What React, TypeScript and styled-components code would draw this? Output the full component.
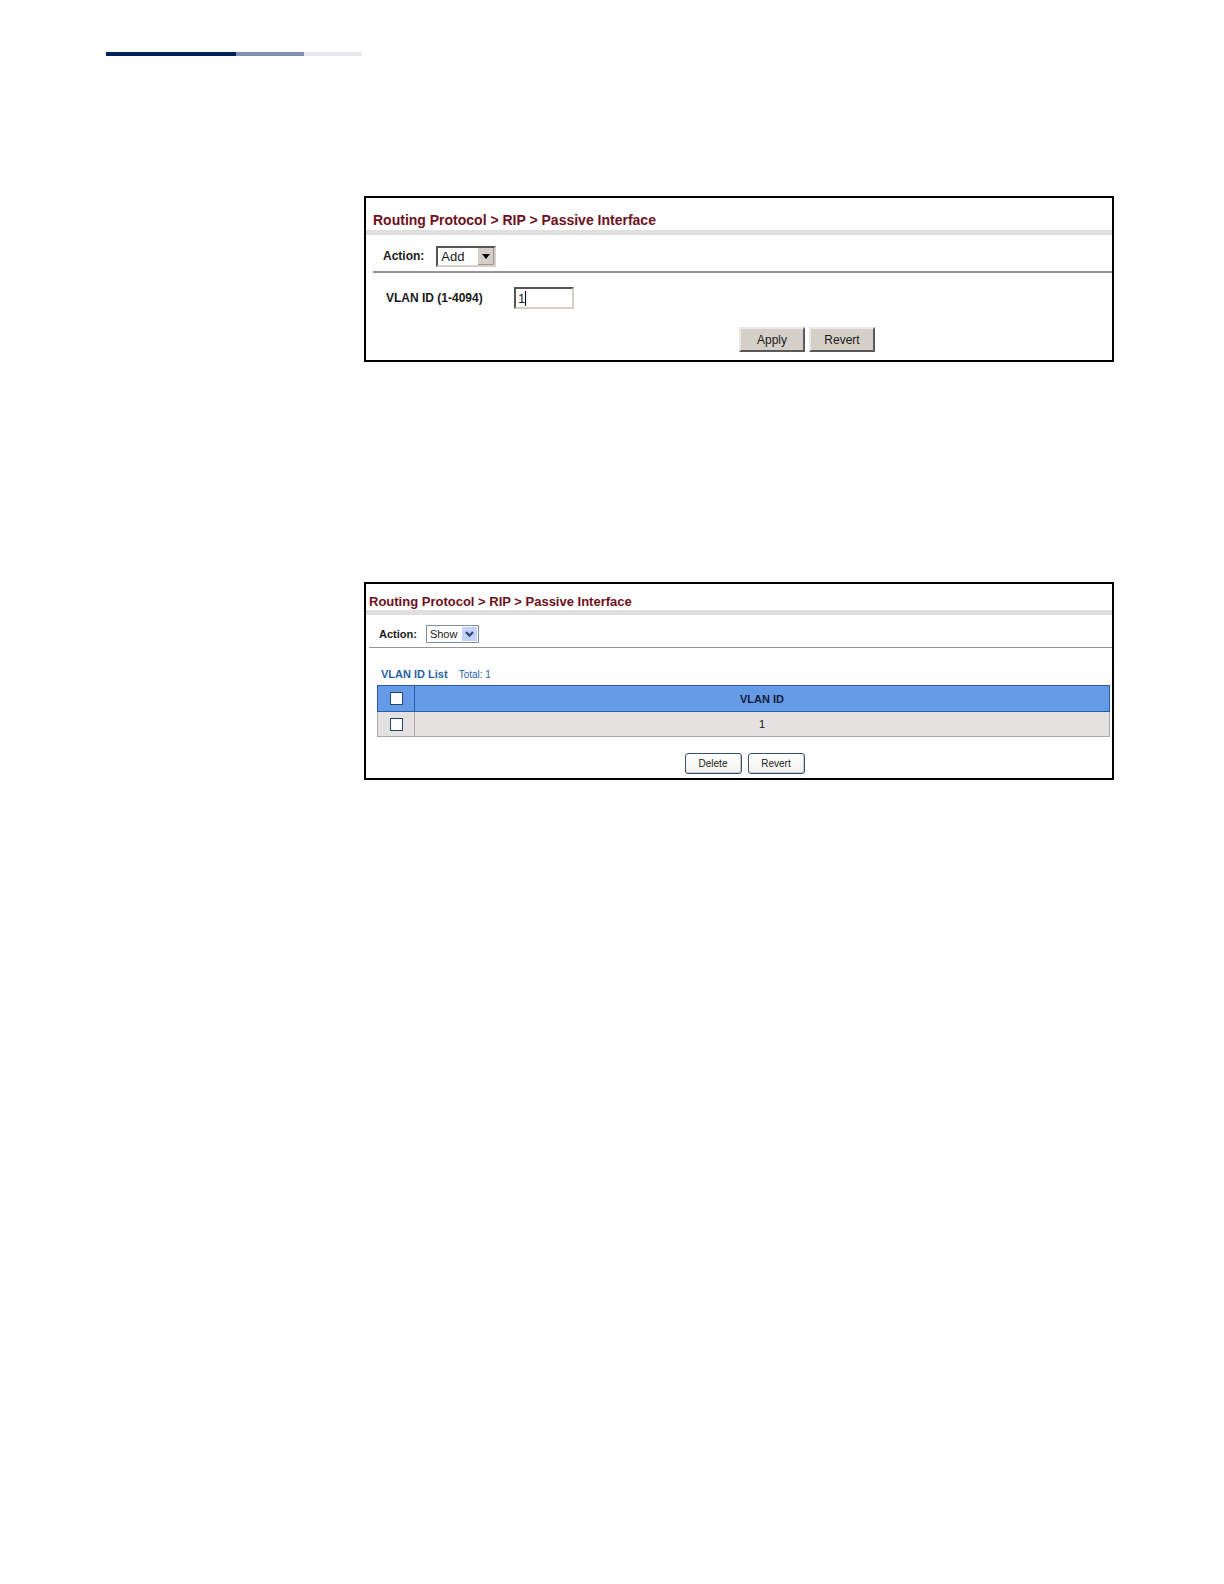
import React, { useState } from 'react';
import styled, { createGlobalStyle } from 'styled-components';

interface VlanRow {
  id: number;
}

const initialRows: VlanRow[] = [{ id: 1 }];

const AddPassiveInterface = () => {
  const [action, setAction] = useState('Add');
  const [vlanId, setVlanId] = useState('1');

  return (
    <St.Panel>
      <St.Title $size={14} $indent={7}>
        Routing Protocol &gt; RIP &gt; Passive Interface
      </St.Title>
      <St.ActionBar $size={12} $height={36} $line={2} $indent={7}>
        <St.Label htmlFor='add-action'>Action:</St.Label>
        <St.SelectBox>
          <St.ClassicSelect
            id='add-action'
            value={action}
            onChange={(e) => setAction(e.target.value)}
          >
            <option>Add</option>
            <option>Show</option>
          </St.ClassicSelect>
          <St.ClassicArrow viewBox='0 0 16 17' aria-hidden='true'>
            <rect width='16' height='17' fill='#d4d0c8' />
            <path d='M0 16.5H15.5V0' fill='none' stroke='#9a9892' />
            <path d='M4 6H12L8 11Z' fill='#000' />
          </St.ClassicArrow>
        </St.SelectBox>
      </St.ActionBar>
      <St.FieldRow>
        <St.Label htmlFor='vlan-id'>VLAN ID (1-4094)</St.Label>
        <St.InputBox>
          <St.VlanInput
            id='vlan-id'
            value={vlanId}
            onChange={(e) => setVlanId(e.target.value)}
          />
          <St.Caret />
        </St.InputBox>
      </St.FieldRow>
      <St.ClassicButtons>
        <St.ClassicButton type='submit'>Apply</St.ClassicButton>
        <St.ClassicButton type='button' onClick={() => setVlanId('1')}>
          Revert
        </St.ClassicButton>
      </St.ClassicButtons>
    </St.Panel>
  );
};

const ShowPassiveInterface = () => {
  const [action, setAction] = useState('Show');
  const [rows, setRows] = useState<VlanRow[]>(initialRows);
  const [selected, setSelected] = useState<number[]>([]);

  const allSelected = rows.length > 0 && selected.length === rows.length;

  const toggleRow = (id: number) => {
    setSelected(
      selected.includes(id)
        ? selected.filter((item) => item !== id)
        : [...selected, id],
    );
  };

  const handleDelete = () => {
    setRows(rows.filter((row) => !selected.includes(row.id)));
    setSelected([]);
  };

  return (
    <St.Panel>
      <St.Title $size={13} $indent={3}>
        Routing Protocol &gt; RIP &gt; Passive Interface
      </St.Title>
      <St.ActionBar $size={11} $height={32} $line={1} $indent={3}>
        <St.Label htmlFor='show-action'>Action:</St.Label>
        <St.SelectBox>
          <St.LunaSelect
            id='show-action'
            value={action}
            onChange={(e) => setAction(e.target.value)}
          >
            <option>Add</option>
            <option>Show</option>
          </St.LunaSelect>
          <St.LunaArrow viewBox='0 0 15 14' aria-hidden='true'>
            <rect width='15' height='14' rx='1' fill='#c3d3fd' />
            <path d='M4 5L7.5 8.5L11 5' fill='none' stroke='#34496e' strokeWidth='2.4' />
          </St.LunaArrow>
        </St.SelectBox>
      </St.ActionBar>
      <St.ListHeading>
        VLAN ID List <St.Total>Total: {rows.length}</St.Total>
      </St.ListHeading>
      <St.Table>
        <thead>
          <tr>
            <St.HeadCell $narrow>
              <St.Checkbox
                type='checkbox'
                aria-label='Select all'
                checked={allSelected}
                onChange={() => setSelected(allSelected ? [] : rows.map((row) => row.id))}
              />
            </St.HeadCell>
            <St.HeadCell>VLAN ID</St.HeadCell>
          </tr>
        </thead>
        <tbody>
          {rows.map((row) => (
            <tr key={row.id}>
              <St.Cell>
                <St.Checkbox
                  type='checkbox'
                  aria-label={`Select VLAN ${row.id}`}
                  checked={selected.includes(row.id)}
                  onChange={() => toggleRow(row.id)}
                />
              </St.Cell>
              <St.Cell>{row.id}</St.Cell>
            </tr>
          ))}
        </tbody>
      </St.Table>
      <St.LunaButtons>
        <St.LunaButton type='button' onClick={handleDelete}>
          Delete
        </St.LunaButton>
        <St.LunaButton
          type='button'
          onClick={() => {
            setRows(initialRows);
            setSelected([]);
          }}
        >
          Revert
        </St.LunaButton>
      </St.LunaButtons>
    </St.Panel>
  );
};

const App = () => (
  <>
    <GlobalStyle />
    <St.Page>
      <St.Stripe>
        <St.StripePart $width={130} $color='#00205f' />
        <St.StripePart $width={68} $color='#8190b0' />
        <St.StripePart $width={58} $color='#e6e8ec' />
      </St.Stripe>
      <St.Figures>
        <AddPassiveInterface />
        <ShowPassiveInterface />
      </St.Figures>
    </St.Page>
  </>
);

const GlobalStyle = createGlobalStyle`
  * {
    box-sizing: border-box;
  }

  body {
    margin: 0;
    background: #fff;
    color: #1a1a1a;
    font-family: 'Liberation Sans', Arial, sans-serif;
  }

  button,
  input,
  select {
    font-family: inherit;
    color: inherit;
  }
`;

const St = {
  Page: styled.main`
    min-height: 100vh;
    padding: 52px 110px 52px 106px;
  `,

  Stripe: styled.div`
    display: flex;
    height: 4px;
  `,

  StripePart: styled.span<{ $width: number; $color: string }>`
    width: ${({ $width }) => $width}px;
    background: ${({ $color }) => $color};
  `,

  Figures: styled.div`
    display: flex;
    flex-direction: column;
    gap: 220px;
    padding: 140px 0 0 258px;
  `,

  Panel: styled.form.attrs({
    onSubmit: (e: React.FormEvent) => e.preventDefault(),
  })`
    border: 2px solid #000;
  `,

  Title: styled.h1<{ $size: number; $indent: number }>`
    margin: 0;
    padding: ${({ $size }) => ($size > 13 ? '14px' : '10px')} 0 ${({ $size }) => ($size > 13 ? '2px' : '0')}
      ${({ $indent }) => $indent}px;
    border-bottom: 5px solid #dfdfdf;
    color: #6e1020;
    font-size: ${({ $size }) => $size}px;
    line-height: 16px;
  `,

  ActionBar: styled.div<{
    $size: number;
    $height: number;
    $line: number;
    $indent: number;
  }>`
    display: flex;
    align-items: center;
    gap: ${({ $size }) => ($size > 11 ? 12 : 9)}px;
    height: ${({ $height }) => $height}px;
    margin-left: ${({ $indent }) => $indent}px;
    padding: 8px 0 2px 10px;
    box-shadow: 0 ${({ $line }) => $line}px 0 #949494;
    font-size: ${({ $size }) => $size}px;
  `,

  Label: styled.label`
    font-weight: bold;
  `,

  SelectBox: styled.span`
    position: relative;
    display: flex;
  `,

  ClassicSelect: styled.select`
    appearance: none;
    width: 60px;
    height: 21px;
    padding: 0 0 0 3px;
    border: 2px solid;
    border-color: #555 #d4d0c8 #d4d0c8 #555;
    border-radius: 0;
    background: #fff;
    font-size: 13px;
  `,

  ClassicArrow: styled.svg`
    position: absolute;
    top: 2px;
    right: 2px;
    width: 16px;
    height: 17px;
    pointer-events: none;
  `,

  LunaSelect: styled.select`
    appearance: none;
    width: 53px;
    height: 18px;
    padding: 0 0 0 3px;
    border: 1px solid #7f8da8;
    border-radius: 0;
    background: #fff;
    font-size: 11px;
  `,

  LunaArrow: styled.svg`
    position: absolute;
    top: 2px;
    right: 2px;
    width: 15px;
    height: 14px;
    pointer-events: none;
  `,

  FieldRow: styled.div`
    display: grid;
    grid-template-columns: 128px 1fr;
    align-items: center;
    padding: 16px 0 0 20px;
    font-size: 12px;
  `,

  InputBox: styled.span`
    position: relative;
    display: flex;
  `,

  VlanInput: styled.input`
    width: 60px;
    height: 22px;
    padding: 0 2px;
    border: 2px solid;
    border-color: #555 #d4d0c8 #d4d0c8 #555;
    outline: none;
    font-size: 13px;
    caret-color: transparent;
  `,

  Caret: styled.span`
    position: absolute;
    top: 4px;
    left: 11px;
    width: 1px;
    height: 15px;
    background: #000;
  `,

  ClassicButtons: styled.div`
    display: flex;
    justify-content: center;
    gap: 4px;
    padding: 18px 0 8px 136px;
  `,

  ClassicButton: styled.button`
    width: 66px;
    height: 25px;
    padding: 0;
    border: 2px solid;
    border-color: #ece9e2 #5a5a5a #5a5a5a #ece9e2;
    background: #d4d0c8;
    font-size: 12px;
  `,

  ListHeading: styled.h2`
    display: flex;
    align-items: baseline;
    gap: 11px;
    margin: 0;
    padding: 20px 0 3px 15px;
    color: #2a5fa5;
    font-size: 11px;
    line-height: 14px;
  `,

  Total: styled.span`
    font-size: 10px;
    font-weight: normal;
  `,

  Table: styled.table`
    width: calc(100% - 13px);
    margin-left: 11px;
    border-collapse: collapse;
    border: 1px solid #a9a9ab;
    text-align: center;
    font-size: 11px;
  `,

  HeadCell: styled.th<{ $narrow?: boolean }>`
    width: ${({ $narrow }) => ($narrow ? '37px' : 'auto')};
    height: 26px;
    padding: 0;
    border: 1px solid #2a5caa;
    background: #659be6;
    color: #101c3c;
  `,

  Cell: styled.td`
    height: 25px;
    padding: 0;
    border: 1px solid #a9a9ab;
    background: #e3e2e1;
  `,

  Checkbox: styled.input`
    appearance: none;
    display: block;
    width: 13px;
    height: 13px;
    margin: 0 auto;
    border: 1px solid #27466f;
    background: #fff;

    &:checked {
      box-shadow: inset 0 0 0 2px #fff;
      background: #21a121;
    }
  `,

  LunaButtons: styled.div`
    display: flex;
    justify-content: center;
    gap: 6px;
    padding: 16px 0 4px 11px;
  `,

  LunaButton: styled.button`
    width: 57px;
    height: 21px;
    padding: 0;
    border: 1px solid #35536f;
    border-radius: 3px;
    background: linear-gradient(#fff, #f1f1ec);
    box-shadow: inset -1px -1px 0 #c9c8d2;
    font-size: 10px;
  `,
};

export default App;
